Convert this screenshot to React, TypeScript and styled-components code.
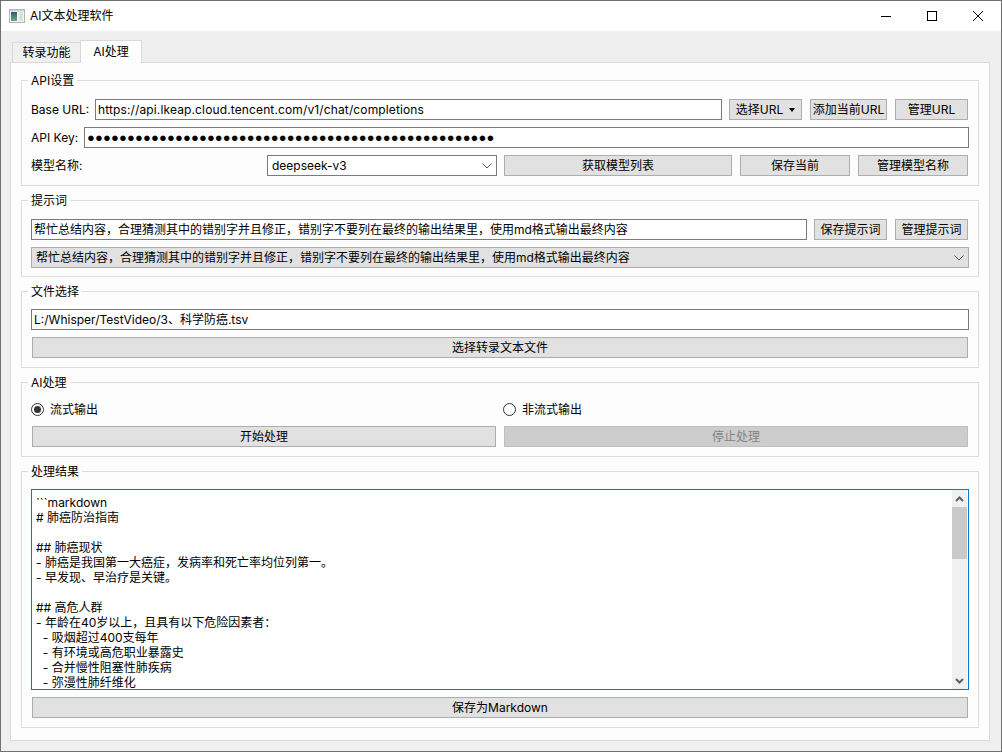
import React, { FC } from 'react'
import styled, { createGlobalStyle } from 'styled-components'

const GlobalStyle = createGlobalStyle`
  html, body {
    margin: 0;
    padding: 0;
    background: #efefef;
  }
  * {
    box-sizing: border-box;
  }
`

const Window = styled.div`
  width: 1002px;
  height: 752px;
  display: flex;
  flex-direction: column;
  background: #efefef;
  border: 1px solid #707070;
  color: #000;
  font-family: 'Inter', 'Noto Sans CJK SC', sans-serif;
  font-size: 12px;
  line-height: 16px;
  overflow: hidden;
`

const TitleBar = styled.div`
  height: 30px;
  flex: none;
  display: flex;
  align-items: center;
  background: #fff;
  padding-left: 8px;
`

const Title = styled.div`
  margin-left: 5px;
  flex: 1;
`

const WindowButton = styled.div`
  width: 46px;
  height: 30px;
  display: flex;
  align-items: center;
  justify-content: center;
`

const Body = styled.div`
  flex: 1;
  padding: 9px 11px 10px 9px;
  display: flex;
  flex-direction: column;
  min-height: 0;
`

const TabBar = styled.div`
  height: 23px;
  flex: none;
  display: flex;
  align-items: flex-end;
  padding-left: 2px;
  margin-bottom: -1px;
  position: relative;
  z-index: 1;
`

const Tab = styled.div<{ $active?: boolean }>`
  height: ${p => (p.$active ? 23 : 21)}px;
  display: flex;
  align-items: center;
  justify-content: center;
  width: ${p => (p.$active ? 62 : 68)}px;
  white-space: nowrap;
  background: ${p => (p.$active ? '#fdfdfd' : '#f0f0f0')};
  border: 1px solid #d9d9d9;
  border-bottom: ${p => (p.$active ? '0' : '1px solid #d9d9d9')};
  border-right: ${p => (p.$active ? '1px solid #d9d9d9' : '0')};
`

const Pane = styled.div`
  flex: 1;
  background: #fdfdfd;
  border: 1px solid #d9d9d9;
  padding: 9px 10px 0 10px;
  display: flex;
  flex-direction: column;
  gap: 6px;
`

const Group = styled.fieldset<{ $height: number; $top?: number }>`
  height: ${p => p.$height}px;
  flex: none;
  margin: 0;
  padding: ${p => p.$top ?? 10}px 9px 0 9px;
  border: 1px solid #dcdcdc;
  min-width: 0;
  display: flex;
  flex-direction: column;
  gap: 7px;
`

const GroupTitle = styled.legend`
  margin-left: -3px;
  padding: 0 3px;
  height: 16px;
  line-height: 18px;
`

const Row = styled.div`
  height: 21px;
  flex: none;
  display: flex;
  align-items: stretch;
`

const FieldLabel = styled.label<{ $width: number }>`
  width: ${p => p.$width}px;
  flex: none;
  display: flex;
  align-items: center;
`

const Field = styled.div<{ $width?: number; $ml?: number }>`
  ${p => (p.$width ? `width: ${p.$width}px; flex: none;` : 'flex: 1;')}
  margin-left: ${p => p.$ml ?? 0}px;
  border: 1px solid #7a7a7a;
  background: #fff;
  padding: 0 2px;
  display: flex;
  align-items: center;
  white-space: nowrap;
  overflow: hidden;
`

const UrlText = styled.span`
  letter-spacing: 0.13px;
`

const Dots = styled.span`
  font-size: 13px;
  letter-spacing: 0.14px;
  font-family: 'Liberation Sans', sans-serif;
`

const Button = styled.div<{ $width?: number; $ml?: number; $disabled?: boolean }>`
  ${p => (p.$width ? `width: ${p.$width}px; flex: none;` : 'flex: 1;')}
  margin-left: ${p => p.$ml ?? 1}px;
  margin-right: 1px;
  background: ${p => (p.$disabled ? '#cccccc' : '#e1e1e1')};
  border: 1px solid ${p => (p.$disabled ? '#bfbfbf' : '#adadad')};
  color: ${p => (p.$disabled ? '#838383' : '#000')};
  display: flex;
  align-items: center;
  justify-content: center;
  white-space: nowrap;
  overflow: hidden;
`

const Caret = styled.span`
  width: 0;
  height: 0;
  margin-left: 6px;
  border-left: 3.5px solid transparent;
  border-right: 3.5px solid transparent;
  border-top: 4px solid #000;
`

const Combo = styled.div<{ $width?: number; $ml?: number; $filled?: boolean }>`
  ${p => (p.$width ? `width: ${p.$width}px; flex: none;` : 'flex: 1;')}
  margin-left: ${p => p.$ml ?? 0}px;
  border: 1px solid ${p => (p.$filled ? '#adadad' : '#7a7a7a')};
  background: ${p => (p.$filled ? '#e1e1e1' : '#fff')};
  padding: 0 4px;
  display: flex;
  align-items: center;
  justify-content: space-between;
  white-space: nowrap;
`

const RadioRow = styled.div`
  height: 19px;
  flex: none;
  display: flex;
`

const RadioItem = styled.div<{ $width: number }>`
  width: ${p => p.$width}px;
  flex: none;
  display: flex;
  align-items: center;
  gap: 6px;
`

const RadioMark = styled.span<{ $checked?: boolean }>`
  width: 13px;
  height: 13px;
  flex: none;
  border-radius: 50%;
  border: 1px solid #333;
  background: #fff;
  display: flex;
  align-items: center;
  justify-content: center;
  &::after {
    content: '';
    width: 7px;
    height: 7px;
    border-radius: 50%;
    background: ${p => (p.$checked ? '#333' : 'transparent')};
  }
`

const Editor = styled.div`
  height: 201px;
  flex: none;
  display: flex;
  border: 1px solid #0078d7;
  background: #fff;
  overflow: hidden;
`

const EditorText = styled.pre`
  flex: 1;
  margin: 0;
  padding: 5px 4px 0 4px;
  font: inherit;
  line-height: 15px;
  overflow: hidden;
`

const ScrollBar = styled.div`
  width: 15px;
  flex: none;
  margin-right: 1px;
  background: #f0f0f0;
  display: flex;
  flex-direction: column;
`

const ScrollArrow = styled.div`
  height: 17px;
  flex: none;
  display: flex;
  align-items: center;
  justify-content: center;
`

const ScrollTrack = styled.div`
  flex: 1;
`

const ScrollThumb = styled.div`
  height: 52px;
  background: #c9c9c9;
`

const Chevron: FC<{ up?: boolean }> = ({ up }) => (
  <svg width="9" height="6" viewBox="0 0 9 6">
    <path d={up ? 'M1 5 L4.5 1.5 L8 5' : 'M1 1 L4.5 4.5 L8 1'} fill="none" stroke="#606060" strokeWidth="2" />
  </svg>
)

const ComboArrow = () => (
  <svg width="10" height="6" viewBox="0 0 10 6">
    <path d="M0.5 0.5 L5 5 L9.5 0.5" fill="none" stroke="#555" strokeWidth="1" />
  </svg>
)

const AppIcon = () => (
  <svg width="16" height="14" viewBox="0 0 16 14">
    <defs>
      <linearGradient id="pane" x1="0" y1="0" x2="0" y2="1">
        <stop offset="0" stopColor="#34586f" />
        <stop offset="1" stopColor="#5fae8c" />
      </linearGradient>
    </defs>
    <rect x="0.5" y="0.5" width="15" height="13" fill="#f4f4f4" stroke="#b5b5b5" />
    <rect x="1" y="1" width="14" height="1.5" fill="#d2d2d2" />
    <rect x="2" y="3" width="6" height="9" fill="url(#pane)" />
    <rect x="10" y="3" width="4" height="9" fill="#d5e3df" />
  </svg>
)

const PROMPT = '帮忙总结内容，合理猜测其中的错别字并且修正，错别字不要列在最终的输出结果里，使用md格式输出最终内容'

const RESULT = `\`\`\`markdown
# 肺癌防治指南

## 肺癌现状
- 肺癌是我国第一大癌症，发病率和死亡率均位列第一。
- 早发现、早治疗是关键。

## 高危人群
- 年龄在40岁以上，且具有以下危险因素者：
  - 吸烟超过400支每年
  - 有环境或高危职业暴露史
  - 合并慢性阻塞性肺疾病
  - 弥漫性肺纤维化`

const App: FC = () => (
  <>
    <GlobalStyle />
    <Window>
      <TitleBar>
        <AppIcon />
        <Title>AI文本处理软件</Title>
        <WindowButton>
          <svg width="10" height="10" viewBox="0 0 10 10">
            <path d="M0 5.5 H10" stroke="#000" strokeWidth="1" />
          </svg>
        </WindowButton>
        <WindowButton>
          <svg width="10" height="10" viewBox="0 0 10 10">
            <rect x="0.5" y="0.5" width="9" height="9" fill="none" stroke="#000" />
          </svg>
        </WindowButton>
        <WindowButton>
          <svg width="10" height="10" viewBox="0 0 10 10">
            <path d="M0 0 L10 10 M10 0 L0 10" stroke="#000" strokeWidth="1" />
          </svg>
        </WindowButton>
      </TitleBar>
      <Body>
        <TabBar>
          <Tab>转录功能</Tab>
          <Tab $active>AI处理</Tab>
        </TabBar>
        <Pane>
          <Group $height={114} $top={11}>
            <GroupTitle>API设置</GroupTitle>
            <Row>
              <FieldLabel $width={64}>Base URL:</FieldLabel>
              <Field>
                <UrlText>https://api.lkeap.cloud.tencent.com/v1/chat/completions</UrlText>
              </Field>
              <Button $width={73} $ml={7}>
                选择URL<Caret />
              </Button>
              <Button $width={77} $ml={7}>添加当前URL</Button>
              <Button $width={73} $ml={7}>管理URL</Button>
            </Row>
            <Row>
              <FieldLabel $width={53}>API Key:</FieldLabel>
              <Field>
                <Dots>{'●'.repeat(51)}</Dots>
              </Field>
            </Row>
            <Row>
              <FieldLabel $width={236}>模型名称:</FieldLabel>
              <Combo $width={230}>
                deepseek-v3
                <ComboArrow />
              </Combo>
              <Button $width={228} $ml={7}>获取模型列表</Button>
              <Button $width={110} $ml={7}>保存当前</Button>
              <Button $width={110} $ml={7}>管理模型名称</Button>
            </Row>
          </Group>
          <Group $height={85} $top={11}>
            <GroupTitle>提示词</GroupTitle>
            <Row>
              <Field>{PROMPT}</Field>
              <Button $width={73} $ml={7}>保存提示词</Button>
              <Button $width={73} $ml={7}>管理提示词</Button>
            </Row>
            <Row>
              <Combo $filled>
                {PROMPT}
                <ComboArrow />
              </Combo>
            </Row>
          </Group>
          <Group $height={85}>
            <GroupTitle>文件选择</GroupTitle>
            <Row>
              <Field>L:/Whisper/TestVideo/3、科学防癌.tsv</Field>
            </Row>
            <Row>
              <Button>选择转录文本文件</Button>
            </Row>
          </Group>
          <Group $height={83}>
            <GroupTitle>AI处理</GroupTitle>
            <RadioRow>
              <RadioItem $width={472}>
                <RadioMark $checked />
                流式输出
              </RadioItem>
              <RadioItem $width={200}>
                <RadioMark />
                非流式输出
              </RadioItem>
            </RadioRow>
            <Row>
              <Button>开始处理</Button>
              <Button $ml={7} $disabled>停止处理</Button>
            </Row>
          </Group>
          <Group $height={265}>
            <GroupTitle>处理结果</GroupTitle>
            <Editor>
              <EditorText>{RESULT}</EditorText>
              <ScrollBar>
                <ScrollArrow>
                  <Chevron up />
                </ScrollArrow>
                <ScrollThumb />
                <ScrollTrack />
                <ScrollArrow>
                  <Chevron />
                </ScrollArrow>
              </ScrollBar>
            </Editor>
            <Row>
              <Button>保存为Markdown</Button>
            </Row>
          </Group>
        </Pane>
      </Body>
    </Window>
  </>
)

export default App
